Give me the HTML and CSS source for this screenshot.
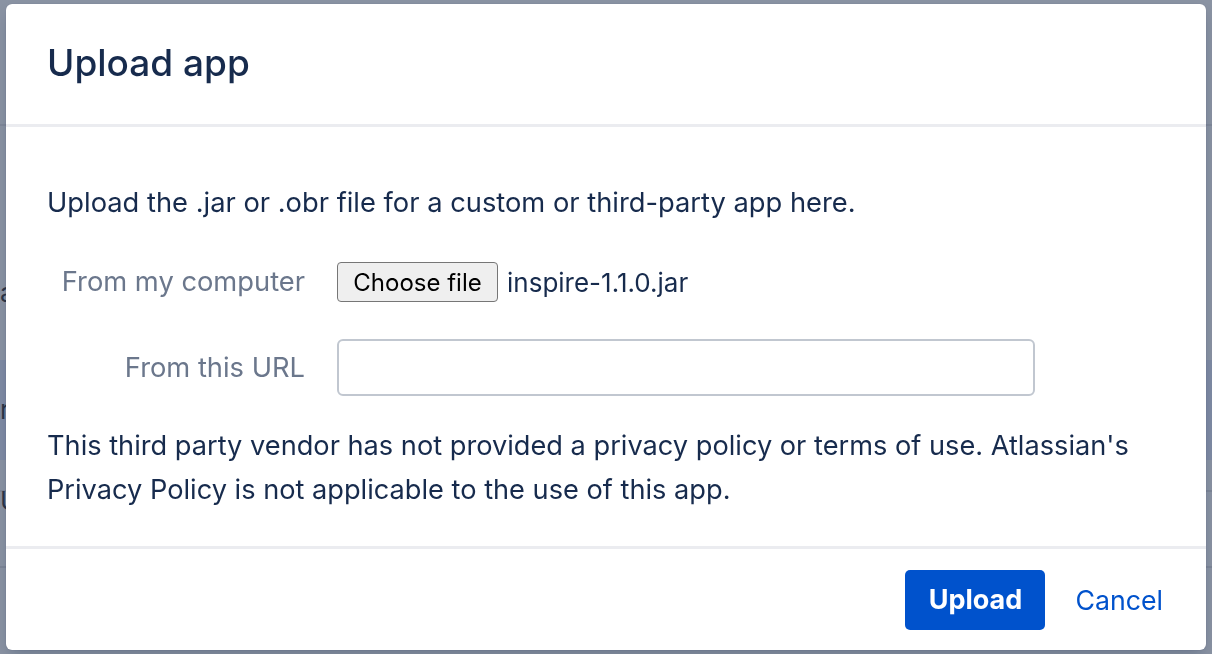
FILE: index.html
```html
<!DOCTYPE html>
<html lang="en">
<head>
<meta charset="utf-8">
<title>Upload app</title>
<link rel="stylesheet" href="styles.css">
</head>
<body>
<div class="page">
  <div class="pg-top"></div>
  <div class="pg-row pg-text">a</div>
  <div class="pg-band">r</div>
  <div class="pg-line"></div>
  <div class="pg-row pg-text2">U</div>
  <div class="pg-line"></div>
</div>
<div class="modal" role="dialog" aria-labelledby="dlg-title">
  <header class="modal-header">
    <h1 id="dlg-title" class="modal-title">Upload app</h1>
  </header>
  <section class="modal-body">
    <p class="intro">Upload the .jar or .obr file for a custom or third-party app here.</p>
    <div class="field-row row-file">
      <label class="field-label">From my computer</label>
      <div class="field-control">
        <span class="file-btn">Choose file</span>
        <span class="file-name">inspire-1.1.0.jar</span>
      </div>
    </div>
    <div class="field-row row-url">
      <label class="field-label" for="url">From this URL</label>
      <div class="field-control">
        <input id="url" class="url-input" type="text">
      </div>
    </div>
    <p class="notice">This third party vendor has not provided a privacy policy or terms of use. Atlassian's<br>Privacy Policy is not applicable to the use of this app.</p>
  </section>
  <footer class="modal-footer">
    <button class="btn-primary" type="button">Upload</button>
    <a class="btn-link" href="#">Cancel</a>
  </footer>
</div>
</body>
</html>
```
FILE: styles.css
```css
* { box-sizing: border-box; }
html, body { margin: 0; padding: 0; }
body {
  width: 1212px;
  height: 654px;
  overflow: hidden;
  background: #8a93a3;
  font-family: Inter, "Noto Sans", sans-serif;
  color: #172b4d;
}
.page { display: flex; flex-direction: column; }
.pg-top { height: 126px; border-bottom: 2px solid #7f8899; }
.pg-row { height: 30px; }
.pg-text { margin-top: 152px; color: #2c3546; font-size: 26px; line-height: 30px; }
.pg-band { margin-top: 52px; height: 100px; background: #7f8ba4; color: #2c3546; font-size: 26px; line-height: 100px; }
.pg-line { margin-top: 30px; border-top: 2px solid #7d8697; }
.pg-text2 { margin-top: -4px; height: 26px; color: #2c3546; font-size: 26px; line-height: 26px; margin-bottom: 22px; }

.modal {
  position: fixed;
  left: 6px;
  top: 4px;
  width: 1200px;
  height: 646px;
  background: #fff;
  border-radius: 6px;
  display: flex;
  flex-direction: column;
  box-shadow: 0 0 1px rgba(9,30,66,0.31), 0 8px 16px -4px rgba(9,30,66,0.25);
}
.modal-header {
  height: 123px;
  border-bottom: 3px solid #ebecf0;
  display: flex;
  align-items: center;
  padding: 0 41px 3px;
}
.modal-title {
  margin: 0;
  font-size: 37px;
  font-weight: 500;
  color: #172b4d;
  line-height: 44px;
}
.modal-body {
  flex: 1;
  padding: 61px 41px 0;
  display: flex;
  flex-direction: column;
}
.intro {
  margin: 0;
  font-size: 27.3px;
  line-height: 30px;
}
.field-row {
  display: flex;
  align-items: center;
  gap: 32px;
}
.row-file { margin-top: 44px; height: 40px; }
.row-url { margin-top: 37px; height: 57px; }
.field-label {
  width: 258px;
  flex: none;
  text-align: right;
  color: #6b778c;
  font-size: 27.3px;
  line-height: 30px;
}
.field-control { display: flex; align-items: center; gap: 9px; }
.file-btn {
  display: inline-flex;
  align-items: center;
  justify-content: center;
  width: 161px;
  height: 40px;
  background: #efefef;
  border: 1.5px solid #767676;
  border-radius: 4px;
  color: #000;
  font-size: 24px;
}
.file-name { font-size: 26px; color: #172b4d; }
.url-input {
  width: 698px;
  height: 57px;
  border: 2px solid #c1c7d0;
  border-radius: 6px;
  background: #fff;
  font: inherit;
  outline: none;
}
.notice {
  margin: 28px 0 0;
  font-size: 27.2px;
  line-height: 44px;
}
.modal-footer {
  height: 104px;
  flex: none;
  border-top: 3px solid #ebecf0;
  display: flex;
  align-items: center;
  justify-content: flex-end;
  gap: 30px;
  padding: 0 43px 0 0;
}
.btn-primary {
  width: 140px;
  height: 60px;
  border: none;
  border-radius: 5px;
  background: #0052cc;
  color: #fff;
  font-family: inherit;
  font-size: 27px;
  font-weight: 700;
}
.btn-link {
  color: #0052cc;
  text-decoration: none;
  font-size: 26.7px;
}
```
